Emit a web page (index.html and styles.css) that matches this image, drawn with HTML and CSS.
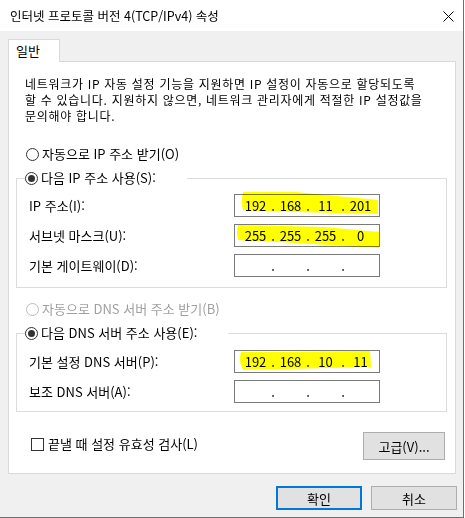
FILE: index.html
```html
<!DOCTYPE html>
<html lang="ko">
  <head>
    <meta charset="UTF-8" />
    <meta name="viewport" content="width=device-width, initial-scale=1.0" />
    <title>인터넷 프로토콜 버전 4(TCP/IPv4) 속성</title>
    <link rel="stylesheet" href="styles.css">
  </head>
  <body>
    <div class="window">
      <div class="titlebar">
        <span class="title">인터넷 프로토콜 버전 4(TCP/IPv4) 속성</span>
        <svg class="close" width="11" height="11" viewBox="0 0 11 11">
          <path d="M0.5 0.5 L10.5 10.5 M10.5 0.5 L0.5 10.5" stroke="#000" stroke-width="1" fill="none" />
        </svg>
      </div>

      <div class="dialog-body">
        <div class="tabs">
          <div class="tab">일반</div>
        </div>

        <div class="panel">
          <p class="intro">
            네트워크가 IP 자동 설정 기능을 지원하면 IP 설정이 자동으로 할당되도록<br />
            할 수 있습니다. 지원하지 않으면, 네트워크 관리자에게 적절한 IP 설정값을<br />
            문의해야 합니다.
          </p>

          <div class="radio radio-auto-ip">
            <span class="radio-mark"></span>자동으로 IP 주소 받기(O)
          </div>

          <fieldset class="group group-ip">
            <legend class="radio legend-ip">
              <span class="radio-mark checked"></span>다음 IP 주소 사용(S):
            </legend>
            <div class="field first">
              <span class="label">IP 주소(I):</span>
              <div class="ip">
                <svg class="marker" width="146" height="23" viewBox="0 0 146 23">
                  <path d="M9 -2 L62 -2 L144 6 L144 20 L60 18 L9 16 Q7 7 9 -2 Z" />
                </svg>
                <span class="octet">192</span><span class="dot">.</span>
                <span class="octet">168</span><span class="dot">.</span>
                <span class="octet">11</span><span class="dot">.</span>
                <span class="octet">201</span>
              </div>
            </div>
            <div class="field">
              <span class="label">서브넷 마스크(U):</span>
              <div class="ip">
                <svg class="marker" width="146" height="23" viewBox="0 0 146 23">
                  <path d="M4 1 L90 3 L145 8 L145 24 L62 19 L4 16 Q2 8 4 1 Z" />
                </svg>
                <span class="octet">255</span><span class="dot">.</span>
                <span class="octet">255</span><span class="dot">.</span>
                <span class="octet">255</span><span class="dot">.</span>
                <span class="octet">0</span>
              </div>
            </div>
            <div class="field">
              <span class="label">기본 게이트웨이(D):</span>
              <div class="ip">
                <span class="octet"></span><span class="dot">.</span>
                <span class="octet"></span><span class="dot">.</span>
                <span class="octet"></span><span class="dot">.</span>
                <span class="octet"></span>
              </div>
            </div>
          </fieldset>

          <div class="radio radio-auto-dns disabled">
            <span class="radio-mark"></span>자동으로 DNS 서버 주소 받기(B)
          </div>

          <fieldset class="group group-dns">
            <legend class="radio legend-dns">
              <span class="radio-mark checked"></span>다음 DNS 서버 주소 사용(E):
            </legend>
            <div class="field first">
              <span class="label">기본 설정 DNS 서버(P):</span>
              <div class="ip">
                <svg class="marker" width="146" height="23" viewBox="0 0 146 23">
                  <path d="M7 2 L136 1 L137 17 L9 20 Q4 11 7 2 Z" />
                </svg>
                <span class="octet">192</span><span class="dot">.</span>
                <span class="octet">168</span><span class="dot">.</span>
                <span class="octet">10</span><span class="dot">.</span>
                <span class="octet">11</span>
              </div>
            </div>
            <div class="field">
              <span class="label">보조 DNS 서버(A):</span>
              <div class="ip">
                <span class="octet"></span><span class="dot">.</span>
                <span class="octet"></span><span class="dot">.</span>
                <span class="octet"></span><span class="dot">.</span>
                <span class="octet"></span>
              </div>
            </div>
          </fieldset>

          <div class="options">
            <div class="check">
              <span class="check-mark"></span>끝낼 때 설정 유효성 검사(L)
            </div>
            <button class="button advanced">고급(V)...</button>
          </div>
        </div>

        <div class="actions">
          <button class="button default">확인</button>
          <button class="button">취소</button>
        </div>
      </div>
    </div>
  </body>
</html>
```

FILE: styles.css
```css
html {
  background: #ffffff;
}
body {
  margin: 0;
  font-family: "Noto Sans CJK KR", "Noto Sans", sans-serif;
  font-size: 13px;
  line-height: 16px;
  color: #000;
}
.window {
  width: 464px;
  height: 518px;
  box-sizing: border-box;
  border-right: 1px solid #6f6f6f;
  border-bottom: 1px solid #6f6f6f;
  background: #f0f0f0;
}
.titlebar {
  height: 31px;
  background: #ffffff;
  display: flex;
  align-items: center;
  justify-content: space-between;
  padding: 0 9px 0 10px;
}
.title {
  font-size: 12.5px;
}
.close {
  display: block;
  margin-top: 1px;
}
.dialog-body {
  padding-top: 8px;
}
.tabs {
  display: flex;
  padding-left: 8px;
}
.tab {
  position: relative;
  z-index: 1;
  width: 52px;
  height: 23px;
  box-sizing: border-box;
  border: 1px solid #d9d9d9;
  border-bottom: none;
  background: #ffffff;
  padding: 3px 0 0 7px;
  margin-bottom: -1px;
}
.panel {
  width: 448px;
  height: 413px;
  box-sizing: border-box;
  margin-left: 8px;
  border: 1px solid #d9d9d9;
  background: #ffffff;
}
.intro {
  margin: 14px 0 0 16px;
  font-size: 12px;
  letter-spacing: 0.7px;
  white-space: nowrap;
}
.radio {
  display: flex;
  align-items: center;
  white-space: nowrap;
}
.radio-mark {
  width: 13px;
  height: 13px;
  box-sizing: border-box;
  border: 1px solid #333;
  border-radius: 50%;
  background: #fff;
  margin-right: 3px;
  display: flex;
  align-items: center;
  justify-content: center;
  flex: none;
}
.radio-mark.checked::after {
  content: "";
  width: 7px;
  height: 7px;
  border-radius: 50%;
  background: #333;
}
.radio.disabled {
  color: #a0a0a0;
}
.radio.disabled .radio-mark {
  border-color: #bcbcbc;
}
.radio-auto-ip {
  margin: 22px 0 0 17px;
}
.radio-auto-dns {
  margin: 13px 0 0 17px;
}
.group {
  margin: 8px 8px 0 7px;
  padding: 0 0 10px 0;
  border: 1px solid #dcdcdc;
  min-width: 0;
}
.group legend {
  padding: 0;
  margin-left: 8px;
  background: #fff;
}
.legend-ip {
  width: 162px;
}
.legend-dns {
  width: 203px;
}
.group-dns {
  padding-bottom: 8px;
}
.field {
  display: flex;
  align-items: center;
  padding-left: 12px;
  margin-top: 7px;
}
.field.first {
  margin-top: 8px;
}
.group-dns .field.first {
  margin-top: 9px;
}
.label {
  width: 205px;
  white-space: nowrap;
}
.ip {
  position: relative;
  width: 146px;
  height: 23px;
  box-sizing: border-box;
  border: 1px solid #7a7a7a;
  background: #fff;
  display: flex;
  align-items: center;
  padding-left: 6px;
}
.marker {
  position: absolute;
  left: -1px;
  top: -1px;
  overflow: visible;
  mix-blend-mode: multiply;
}
.marker path {
  fill: #ffff00;
}
.octet {
  position: relative;
  width: 29px;
  text-align: center;
}
.dot {
  position: relative;
  width: 6px;
  text-align: center;
}
.options {
  display: flex;
  justify-content: space-between;
  align-items: center;
  margin: 20px 10px 0 22px;
}
.check {
  display: flex;
  align-items: center;
  margin-top: -4px;
}
.check-mark {
  width: 13px;
  height: 13px;
  box-sizing: border-box;
  border: 1px solid #333;
  background: #fff;
  margin-right: 4px;
}
.button {
  font-family: inherit;
  font-size: 13px;
  color: #000;
  background: #e1e1e1;
  border: 1px solid #adadad;
  width: 86px;
  height: 24px;
  padding: 0;
}
.button.advanced {
  width: 82px;
  height: 28px;
}
.button.default {
  border: 2px solid #0078d7;
}
.actions {
  display: flex;
  justify-content: flex-end;
  gap: 9px;
  padding-right: 6px;
  margin-top: 12px;
}
```
